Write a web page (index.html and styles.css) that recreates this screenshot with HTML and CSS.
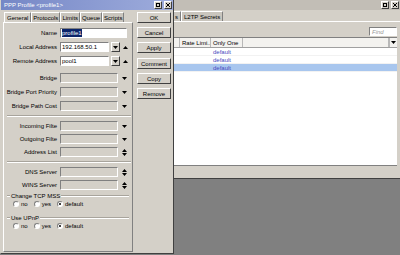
FILE: index.html
```html
<!DOCTYPE html>
<html>

<head>
    <title>PPP Profile</title>
    <link rel="stylesheet" href="styles.css">
</head>

<body>

    <div class="window ppp">
        <div class="titlebar">
            <span class="wtitle"></span>
            <span class="wbtn"><svg width="4" height="4" viewBox="0 0 4 4"><rect x="0.5" y="0.5" width="3" height="3" fill="none" stroke="#000"/></svg></span>
            <span class="wbtn"><svg width="4" height="4" viewBox="0 0 4 4"><path d="M0 0L4 4M4 0L0 4" stroke="#000"/></svg></span>
        </div>
        <div class="tabstrip back-tabs">
            <span class="tab partial">s</span>
            <span class="tab">L2TP Secrets</span>
        </div>
        <div class="toolbar">
            <span class="find">Find</span>
        </div>
        <div class="list">
            <div class="lrow lhead">
                <span class="cell c-name"></span>
                <span class="cell c-rate">Rate Limi...</span>
                <span class="cell c-one">Only One</span>
                <span class="cell c-fill"></span>
                <span class="cell c-menu"><svg width="5" height="3" viewBox="0 0 5 3"><path d="M0 0h5L2.5 3z"/></svg></span>
            </div>
            <div class="lrow"><span class="cell c-name"></span><span class="cell c-rate"></span><span class="cell c-one">default</span></div>
            <div class="lrow"><span class="cell c-name"></span><span class="cell c-rate"></span><span class="cell c-one">default</span></div>
            <div class="lrow selected"><span class="cell c-name"></span><span class="cell c-rate"></span><span class="cell c-one">default</span></div>
        </div>
        <div class="statusbar"></div>
    </div>

    <div class="window dialog">
        <div class="titlebar active">
            <span class="wtitle">PPP Profile &lt;profile1&gt;</span>
            <span class="wbtn"><svg width="4" height="4" viewBox="0 0 4 4"><rect x="0.5" y="0.5" width="3" height="3" fill="none" stroke="#000"/></svg></span>
            <span class="wbtn"><svg width="4" height="4" viewBox="0 0 4 4"><path d="M0 0L4 4M4 0L0 4" stroke="#000"/></svg></span>
        </div>

        <div class="dlg-body">
            <div class="tabpane">
                <div class="tabstrip">
                    <span class="tab current">General</span>
                    <span class="tab">Protocols</span>
                    <span class="tab">Limits</span>
                    <span class="tab">Queue</span>
                    <span class="tab">Scripts</span>
                </div>

                <div class="panel">
                    <div class="frow">
                        <span class="flabel">Name</span>
                        <span class="field w-name"><span class="sel">profile1</span></span>
                    </div>
                    <div class="frow">
                        <span class="flabel">Local Address</span>
                        <span class="field w-short">192.168.50.1</span>
                        <span class="ddbtn"><svg width="5" height="3" viewBox="0 0 5 3"><path d="M0 0h5L2.5 3z"/></svg></span>
                        <span class="ico"><svg width="5" height="3" viewBox="0 0 5 3"><path d="M0 3h5L2.5 0z"/></svg></span>
                    </div>
                    <div class="frow">
                        <span class="flabel">Remote Address</span>
                        <span class="field w-short">pool1</span>
                        <span class="ddbtn"><svg width="5" height="3" viewBox="0 0 5 3"><path d="M0 0h5L2.5 3z"/></svg></span>
                        <span class="ico"><svg width="5" height="3" viewBox="0 0 5 3"><path d="M0 3h5L2.5 0z"/></svg></span>
                    </div>
                    <div class="frow gap-big">
                        <span class="flabel">Bridge</span>
                        <span class="field off w-long"></span>
                        <span class="ico"><svg width="5" height="3" viewBox="0 0 5 3"><path d="M0 0h5L2.5 3z"/></svg></span>
                    </div>
                    <div class="frow">
                        <span class="flabel">Bridge Port Priority</span>
                        <span class="field off w-long"></span>
                        <span class="ico"><svg width="5" height="3" viewBox="0 0 5 3"><path d="M0 0h5L2.5 3z"/></svg></span>
                    </div>
                    <div class="frow">
                        <span class="flabel">Bridge Path Cost</span>
                        <span class="field off w-long"></span>
                        <span class="ico"><svg width="5" height="3" viewBox="0 0 5 3"><path d="M0 0h5L2.5 3z"/></svg></span>
                    </div>

                    <div class="sep"></div>

                    <div class="frow">
                        <span class="flabel">Incoming Filte</span>
                        <span class="field off w-long"></span>
                        <span class="ico"><svg width="5" height="3" viewBox="0 0 5 3"><path d="M0 0h5L2.5 3z"/></svg></span>
                    </div>
                    <div class="frow tight">
                        <span class="flabel">Outgoing Filte</span>
                        <span class="field off w-long"></span>
                        <span class="ico"><svg width="5" height="3" viewBox="0 0 5 3"><path d="M0 0h5L2.5 3z"/></svg></span>
                    </div>
                    <div class="frow tight">
                        <span class="flabel">Address List</span>
                        <span class="field off w-long"></span>
                        <span class="ico"><svg width="5" height="7" viewBox="0 0 5 7"><path d="M0 3h5L2.5 0zM0 4h5L2.5 7z"/></svg></span>
                    </div>

                    <div class="sep"></div>

                    <div class="frow">
                        <span class="flabel">DNS Server</span>
                        <span class="field off w-long"></span>
                        <span class="ico"><svg width="5" height="7" viewBox="0 0 5 7"><path d="M0 3h5L2.5 0zM0 4h5L2.5 7z"/></svg></span>
                    </div>
                    <div class="frow tight">
                        <span class="flabel">WINS Server</span>
                        <span class="field off w-long"></span>
                        <span class="ico"><svg width="5" height="7" viewBox="0 0 5 7"><path d="M0 3h5L2.5 0zM0 4h5L2.5 7z"/></svg></span>
                    </div>

                    <div class="group">
                        <div class="legend"><span class="gline short"></span><span>Change TCP MSS</span><span class="gline"></span></div>
                        <div class="radios">
                            <span class="radio"></span><span class="rlabel">no</span>
                            <span class="radio"></span><span class="rlabel">yes</span>
                            <span class="radio on"></span><span class="rlabel">default</span>
                        </div>
                    </div>

                    <div class="group second">
                        <div class="legend"><span class="gline short"></span><span>Use UPnP</span><span class="gline"></span></div>
                        <div class="radios">
                            <span class="radio"></span><span class="rlabel">no</span>
                            <span class="radio"></span><span class="rlabel">yes</span>
                            <span class="radio on"></span><span class="rlabel">default</span>
                        </div>
                    </div>
                </div>
            </div>

            <div class="buttons">
                <span class="btn">OK</span>
                <span class="btn">Cancel</span>
                <span class="btn">Apply</span>
                <span class="btn spaced">Comment</span>
                <span class="btn">Copy</span>
                <span class="btn">Remove</span>
            </div>
        </div>
    </div>

</body>

</html>
```

FILE: styles.css
```css
body {
    margin: 0;
    width: 400px;
    height: 255px;
    position: relative;
    overflow: hidden;
    background-color: #808080;
    font-family: "Liberation Sans", Arial, sans-serif;
    font-size: 6px;
    line-height: 1;
    color: #000;
}

.window {
    position: absolute;
    top: 0;
    box-sizing: border-box;
    display: flex;
    flex-direction: column;
    background-color: #d4d0c8;
}

/* title bars */

.titlebar {
    height: 10px;
    flex: none;
    display: flex;
    align-items: center;
    gap: 2px;
    padding: 0 1px 0 3px;
    background-color: #c2beb6;
}

.titlebar.active {
    background: linear-gradient(to right, #7587c6, #9eacdc);
    color: #fff;
}

.wtitle {
    flex: 1;
    white-space: nowrap;
}

.wbtn {
    width: 8px;
    height: 8px;
    box-sizing: border-box;
    display: flex;
    align-items: center;
    justify-content: center;
    background-color: #d4d0c8;
    border: 1px solid;
    border-color: #fff #404040 #404040 #fff;
}

/* tabs */

.tabstrip {
    height: 10px;
    flex: none;
    display: flex;
    align-items: stretch;
    overflow: hidden;
}

.tab {
    flex: none;
    display: flex;
    align-items: center;
    padding: 0 1px;
    white-space: nowrap;
    background-color: #c9c5bd;
    border: 1px solid;
    border-color: #fff #808080 transparent #fff;
    border-bottom: none;
}

.tab.current {
    padding: 0 2px;
    background-color: #d4d0c8;
}

/* back window */

.ppp {
    left: 174px;
    width: 226px;
    height: 179px;
    border-bottom: 1px solid #404040;
}

.back-tabs {
    margin-top: 1px;
}

.back-tabs .tab {
    padding: 0 2px;
}

.back-tabs .tab.partial {
    padding: 0 2px 0 1px;
    border-left: none;
}

.toolbar {
    height: 16px;
    flex: none;
    display: flex;
    justify-content: flex-end;
    align-items: flex-end;
    padding: 0 3px 1px 0;
    border-top: 1px solid #fff;
    box-sizing: border-box;
}

.find {
    width: 28px;
    height: 9px;
    box-sizing: border-box;
    padding-left: 2px;
    display: flex;
    align-items: center;
    background-color: #fff;
    border: 1px solid;
    border-color: #808080 #fff #fff #808080;
    color: #9a9a9a;
    font-style: italic;
}

.list {
    height: 128px;
    flex: none;
    margin-right: 3px;
    background-color: #fff;
    border-top: 1px solid #808080;
    box-sizing: border-box;
}

.lrow {
    height: 8px;
    display: flex;
    align-items: center;
    border-bottom: 1px solid #f2f2f2;
    box-sizing: border-box;
}

.lrow.lhead {
    height: 10px;
    background-color: #f3f2ef;
    border-bottom: 1px solid #a0a0a0;
}

.lrow.selected {
    background-color: #a8c6ee;
}

.cell {
    height: 100%;
    display: flex;
    align-items: center;
    box-sizing: border-box;
    padding-left: 2px;
    white-space: nowrap;
    overflow: hidden;
    color: #4848c0;
}

.lhead .cell {
    color: #000;
    border-right: 1px solid #b8b8b8;
}

.c-name {
    width: 6px;
    padding: 0;
}

.c-rate {
    width: 31px;
}

.c-one {
    width: 32px;
}

.c-fill {
    flex: 1;
}

.lhead .c-menu {
    width: 8px;
    padding: 0;
    justify-content: center;
    border-left: 1px solid #b8b8b8;
    border-right: none;
}

.statusbar {
    flex: 1;
    margin-right: 3px;
    border-top: 1px solid #808080;
}

/* dialog */

.dialog {
    left: 0;
    width: 174px;
    height: 254px;
    border: 1px solid;
    border-color: #d4d0c8 #404040 #404040 #d4d0c8;
    border-top: none;
}

.dlg-body {
    flex: 1;
    display: flex;
    gap: 4px;
    padding: 2px 2px 1px 2px;
    min-height: 0;
}

.tabpane {
    width: 130px;
    flex: none;
    display: flex;
    flex-direction: column;
}

.tabpane .tabstrip {
    padding-left: 1px;
}

.panel {
    flex: 1;
    display: flex;
    flex-direction: column;
    padding-top: 5px;
    border: 1px solid;
    border-color: #fff #808080 #808080 #fff;
}

.frow {
    height: 10px;
    flex: none;
    display: flex;
    align-items: center;
    margin-top: 4px;
}

.frow:first-child {
    margin-top: 0;
}

.frow.gap-big {
    margin-top: 7px;
}

.frow.tight {
    margin-top: 3px;
}

.flabel {
    width: 53px;
    margin-right: 3px;
    text-align: right;
    white-space: nowrap;
}

.field {
    height: 10px;
    box-sizing: border-box;
    display: flex;
    align-items: center;
    padding-left: 1px;
    white-space: nowrap;
    background-color: #fff;
    border: 1px solid;
    border-color: #808080 #fff #fff #808080;
}

.field.off {
    background-color: #d4d0c8;
}

.w-name {
    width: 67px;
}

.w-short {
    width: 49px;
}

.w-long {
    width: 58px;
}

.sel {
    background-color: #0a246a;
    color: #fff;
    padding: 1px 0;
}

.ddbtn {
    width: 9px;
    height: 10px;
    margin-left: 2px;
    box-sizing: border-box;
    display: flex;
    align-items: center;
    justify-content: center;
    border: 1px solid;
    border-color: #fff #404040 #404040 #fff;
}

.ico {
    margin-left: 3px;
    display: flex;
    align-items: center;
}

.frow .field.off + .ico {
    margin-left: 4px;
}

.sep {
    height: 2px;
    flex: none;
    margin: 4px 1px 0 3px;
    border-top: 1px solid #a8a49c;
    border-bottom: 1px solid #fff;
    box-sizing: border-box;
}

.sep + .frow {
    margin-top: 4px;
}

.group {
    margin: 2px 3px 0 3px;
}

.group.second {
    margin-top: 6px;
}

.legend {
    height: 7px;
    display: flex;
    align-items: center;
    gap: 1px;
    white-space: nowrap;
}

.gline {
    flex: 1;
    height: 2px;
    border-top: 1px solid #a8a49c;
    border-bottom: 1px solid #fff;
    box-sizing: border-box;
}

.gline.short {
    flex: none;
    width: 3px;
}

.radios {
    height: 8px;
    margin-top: 1px;
    padding-left: 6px;
    display: flex;
    align-items: center;
}

.radio {
    width: 6px;
    height: 6px;
    box-sizing: border-box;
    border-radius: 50%;
    background-color: #fff;
    border: 1px solid;
    border-color: #808080 #fff #fff #808080;
    display: flex;
    align-items: center;
    justify-content: center;
}

.radio.on::after {
    content: "";
    width: 2px;
    height: 2px;
    border-radius: 50%;
    background-color: #000;
}

.rlabel {
    margin: 0 6px 0 2px;
}

.buttons {
    width: 34px;
    flex: none;
    display: flex;
    flex-direction: column;
}

.btn {
    height: 11px;
    flex: none;
    box-sizing: border-box;
    display: flex;
    align-items: center;
    justify-content: center;
    margin-bottom: 4px;
    border: 1px solid;
    border-color: #fff #404040 #404040 #fff;
}

.btn.spaced {
    margin-top: 1px;
}
```
